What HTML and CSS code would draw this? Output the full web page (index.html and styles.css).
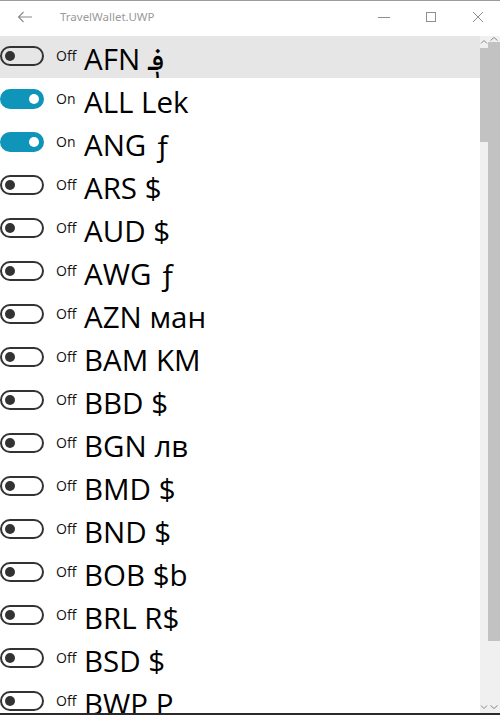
FILE: index.html
```html
<!DOCTYPE html>
<html>
<head>
<meta charset="utf-8">
<link rel="stylesheet" href="styles.css">
</head>
<body>
<div class="window">
  <div class="titlebar">
    <svg class="back" width="16" height="12" viewBox="0 0 16 12"><path d="M15 6H1.5M6.5 1L1.5 6l5 5" fill="none" stroke="#8a8a8a" stroke-width="1.1"/></svg>
    <span class="title">TravelWallet.UWP</span>
    <div class="controls">
      <svg class="ctl min" width="12" height="12" viewBox="0 0 12 12"><path d="M0 6.5h12" stroke="#8f8f8f" stroke-width="1"/></svg>
      <svg class="ctl max" width="12" height="12" viewBox="0 0 12 12"><rect x="1.5" y="1.5" width="9" height="9" fill="none" stroke="#8f8f8f" stroke-width="1"/></svg>
      <svg class="ctl close" width="12" height="12" viewBox="0 0 12 12"><path d="M1 1l10 10M11 1L1 11" stroke="#8f8f8f" stroke-width="1"/></svg>
    </div>
  </div>
  <div class="body">
    <div class="list">
      <div class="row selected"><span class="toggle"><span class="knob"></span></span><span class="state">Off</span><span class="cur">AFN ؋</span></div>
      <div class="row"><span class="toggle on"><span class="knob"></span></span><span class="state">On</span><span class="cur">ALL Lek</span></div>
      <div class="row"><span class="toggle on"><span class="knob"></span></span><span class="state">On</span><span class="cur">ANG ƒ</span></div>
      <div class="row"><span class="toggle"><span class="knob"></span></span><span class="state">Off</span><span class="cur">ARS $</span></div>
      <div class="row"><span class="toggle"><span class="knob"></span></span><span class="state">Off</span><span class="cur">AUD $</span></div>
      <div class="row"><span class="toggle"><span class="knob"></span></span><span class="state">Off</span><span class="cur">AWG ƒ</span></div>
      <div class="row"><span class="toggle"><span class="knob"></span></span><span class="state">Off</span><span class="cur">AZN ман</span></div>
      <div class="row"><span class="toggle"><span class="knob"></span></span><span class="state">Off</span><span class="cur">BAM KM</span></div>
      <div class="row"><span class="toggle"><span class="knob"></span></span><span class="state">Off</span><span class="cur">BBD $</span></div>
      <div class="row"><span class="toggle"><span class="knob"></span></span><span class="state">Off</span><span class="cur">BGN лв</span></div>
      <div class="row"><span class="toggle"><span class="knob"></span></span><span class="state">Off</span><span class="cur">BMD $</span></div>
      <div class="row"><span class="toggle"><span class="knob"></span></span><span class="state">Off</span><span class="cur">BND $</span></div>
      <div class="row"><span class="toggle"><span class="knob"></span></span><span class="state">Off</span><span class="cur">BOB $b</span></div>
      <div class="row"><span class="toggle"><span class="knob"></span></span><span class="state">Off</span><span class="cur">BRL R$</span></div>
      <div class="row"><span class="toggle"><span class="knob"></span></span><span class="state">Off</span><span class="cur">BSD $</span></div>
      <div class="row"><span class="toggle"><span class="knob"></span></span><span class="state">Off</span><span class="cur">BWP P</span></div>
    </div>
    <div class="sb inner">
      <svg class="arrow" width="8" height="6" viewBox="0 0 8 6"><path d="M1 4.5L4 1.5l3 3" fill="none" stroke="#8a8a8a" stroke-width="1"/></svg>
      <div class="thumb inner-thumb"></div>
      <div class="spacer"></div>
      <svg class="arrow" width="8" height="6" viewBox="0 0 8 6"><path d="M1 1.5L4 4.5l3-3" fill="none" stroke="#8a8a8a" stroke-width="1"/></svg>
    </div>
    <div class="sb outer">
      <svg class="arrow" width="10" height="6" viewBox="0 0 10 6"><path d="M1.5 4.5L5 1.5l3.5 3" fill="none" stroke="#8a8a8a" stroke-width="1"/></svg>
      <div class="thumb outer-thumb"></div>
      <div class="spacer"></div>
      <svg class="arrow" width="10" height="6" viewBox="0 0 10 6"><path d="M1.5 1.5L5 4.5l3.5-3" fill="none" stroke="#8a8a8a" stroke-width="1"/></svg>
    </div>
  </div>
  <div class="bottomline"></div>
</div>
</body>
</html>
```
FILE: styles.css
```css
html, body {
  margin: 0;
  padding: 0;
  background: #ffffff;
}
.window {
  width: 500px;
  height: 715px;
  overflow: hidden;
  display: flex;
  flex-direction: column;
  font-family: "Open Sans", "Noto Sans", "DejaVu Sans", sans-serif;
  color: #000;
}
.titlebar {
  height: 35px;
  flex: 0 0 35px;
  border-top: 1px solid #9c9c9c;
  display: flex;
  align-items: center;
  background: #fff;
}
.back {
  margin-left: 17px;
  margin-top: -4px;
}
.title {
  margin-left: 27px;
  margin-top: -4px;
  font-size: 11.5px;
  color: #9a9a9a;
  font-family: "Noto Sans", "Open Sans", sans-serif;
}
.controls {
  margin-left: auto;
  display: flex;
  align-items: center;
  margin-top: -4px;
  margin-right: 16px;
  gap: 35px;
}
.body {
  flex: 1;
  display: flex;
  min-height: 0;
}
.list {
  width: 480px;
  flex: 0 0 480px;
  overflow: hidden;
}
.row {
  height: 43px;
  display: flex;
  align-items: flex-start;
  box-sizing: border-box;
}
.row.selected {
  background: #e6e6e6;
  height: 42px;
  margin-bottom: 1px;
}
.toggle {
  margin-top: 10px;
  width: 44px;
  height: 20px;
  box-sizing: border-box;
  border: 2px solid #333;
  border-radius: 10px;
  position: relative;
  flex: 0 0 auto;
}
.knob {
  position: absolute;
  left: 3px;
  top: 3px;
  width: 10px;
  height: 10px;
  border-radius: 50%;
  background: #333;
}
.toggle.on {
  background: #0f95ba;
  border-color: #0f95ba;
}
.toggle.on .knob {
  background: #fff;
  left: auto;
  right: 3px;
}
.state {
  margin-left: 12px;
  margin-top: 10px;
  font-size: 14px;
  line-height: 20px;
  width: 28px;
  color: #111;
}
.cur {
  font-size: 29.5px;
  line-height: 38px;
  margin-top: 4px;
  letter-spacing: 0;
}
.sb {
  background: #f0f0f0;
  display: flex;
  flex-direction: column;
  align-items: center;
}
.sb.inner {
  width: 8px;
  flex: 0 0 8px;
}
.sb.outer {
  width: 12px;
  flex: 0 0 12px;
}
.arrow {
  flex: 0 0 auto;
}
.sb.inner .arrow:first-child {
  margin-top: 3px;
}
.sb.outer .arrow:first-child {
  margin-top: 0px;
}
.thumb {
  background: #c2c2c2;
  width: 100%;
}
.inner-thumb {
  margin-top: 3px;
  height: 94px;
}
.outer-thumb {
  margin-top: 0px;
  height: 599px;
}
.spacer {
  flex: 1;
}
.sb .arrow:last-child {
  margin-bottom: 3px;
}
.bottomline {
  height: 2px;
  flex: 0 0 2px;
  background: #2a2a2a;
}
```
